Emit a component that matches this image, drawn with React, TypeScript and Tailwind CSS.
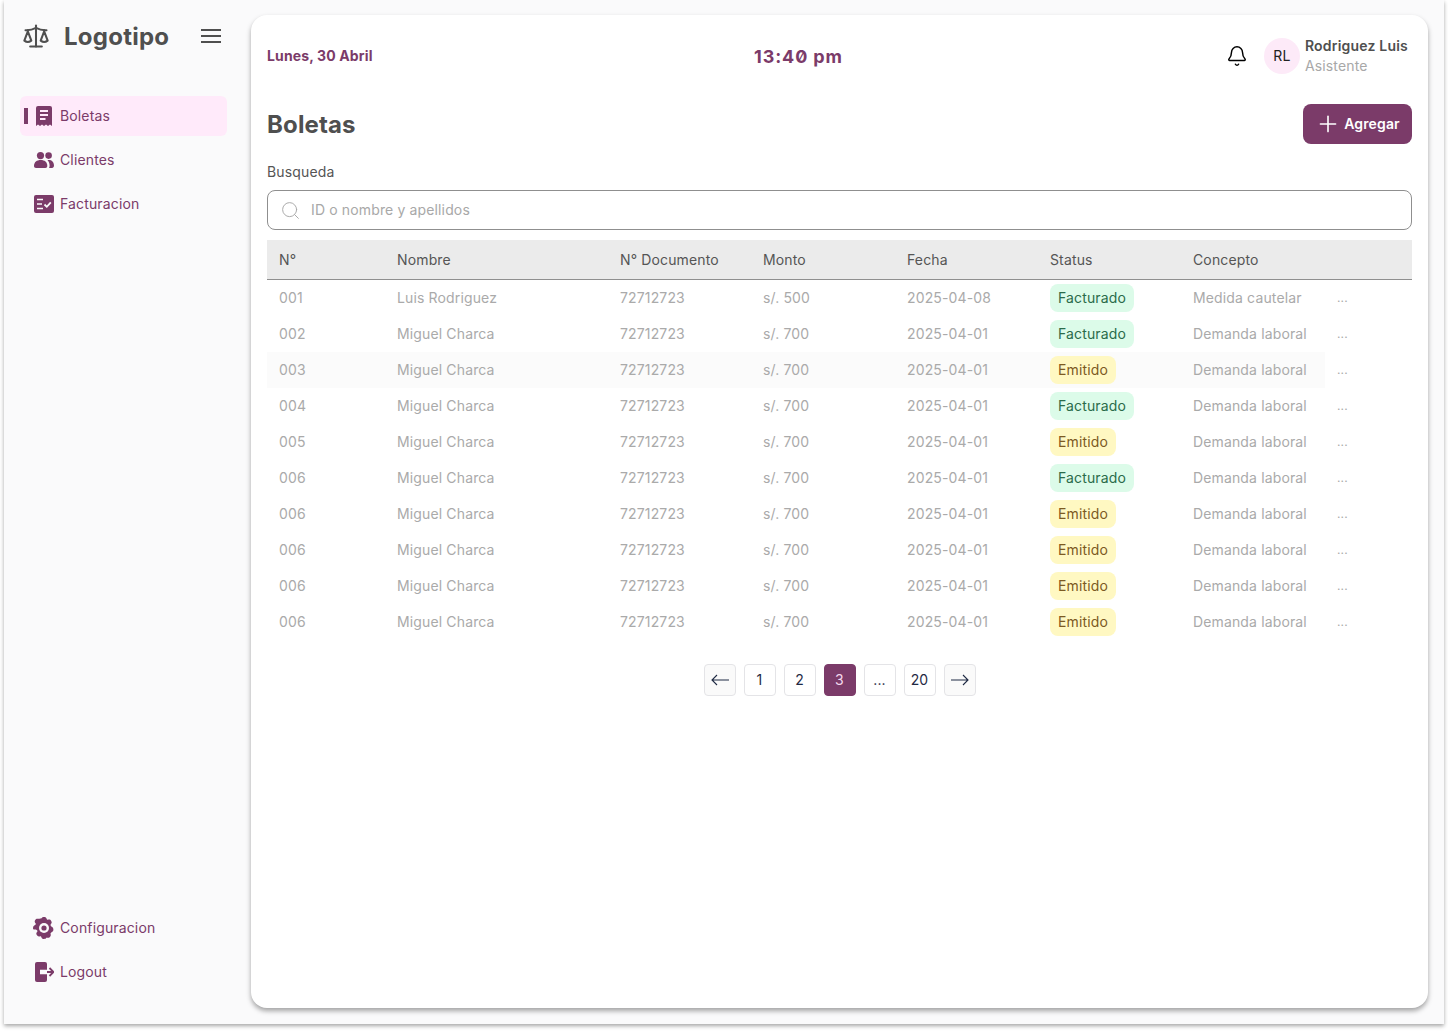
import { Bell, Plus, Scale, Search } from "lucide-react";

const rows = [
  { n: "001", name: "Luis Rodriguez", monto: "s/. 500", fecha: "2025-04-08", status: "Facturado", concepto: "Medida cautelar" },
  { n: "002", name: "Miguel Charca", monto: "s/. 700", fecha: "2025-04-01", status: "Facturado", concepto: "Demanda laboral" },
  { n: "003", name: "Miguel Charca", monto: "s/. 700", fecha: "2025-04-01", status: "Emitido", concepto: "Demanda laboral", hover: true },
  { n: "004", name: "Miguel Charca", monto: "s/. 700", fecha: "2025-04-01", status: "Facturado", concepto: "Demanda laboral" },
  { n: "005", name: "Miguel Charca", monto: "s/. 700", fecha: "2025-04-01", status: "Emitido", concepto: "Demanda laboral" },
  { n: "006", name: "Miguel Charca", monto: "s/. 700", fecha: "2025-04-01", status: "Facturado", concepto: "Demanda laboral" },
  { n: "006", name: "Miguel Charca", monto: "s/. 700", fecha: "2025-04-01", status: "Emitido", concepto: "Demanda laboral" },
  { n: "006", name: "Miguel Charca", monto: "s/. 700", fecha: "2025-04-01", status: "Emitido", concepto: "Demanda laboral" },
  { n: "006", name: "Miguel Charca", monto: "s/. 700", fecha: "2025-04-01", status: "Emitido", concepto: "Demanda laboral" },
  { n: "006", name: "Miguel Charca", monto: "s/. 700", fecha: "2025-04-01", status: "Emitido", concepto: "Demanda laboral" },
];

const cols = "grid grid-cols-[118px_223px_143px_144px_143px_143px_144px_1fr] items-center";

function ReceiptIcon() {
  return (
    <svg viewBox="0 0 16 20" className="h-5 w-4 shrink-0" fill="#7b3b69">
      <path d="M2 0h12a2 2 0 0 1 2 2v18l-2-1.4-2 1.4-2-1.4-2 1.4-2-1.4-2 1.4-2-1.4L0 20V2a2 2 0 0 1 2-2z" />
      <path d="M4 4h8v2H4zM4 8h8v2H4zM4 12h5.5v2H4z" fill="#ffeafa" />
    </svg>
  );
}

function UsersIcon() {
  return (
    <svg viewBox="0 0 20 16" className="h-4 w-5 shrink-0" fill="#7b3b69">
      <circle cx="6.5" cy="3.6" r="3.6" />
      <circle cx="14.6" cy="3.6" r="3.3" />
      <path d="M0 14c0-4 2.8-6 6.7-6s6.6 2 6.6 6c0 1.3-.8 2-2 2H2c-1.200 0-2-.7-2-2z" />
      <path d="M14.800 8c3 0 5.200 2 5.200 5.600 0 1.500-.8 2.400-2 2.400h-3c.4-.7.6-1.300.6-2.200 0-2.300-.8-4.300-2.100-5.500.4-.2.900-.3 1.300-.3z" />
    </svg>
  );
}

function BillingIcon() {
  return (
    <svg viewBox="0 0 20 18" className="h-[18px] w-5 shrink-0">
      <rect width="20" height="18" rx="2" fill="#7b3b69" />
      <path d="M3 4.500h6M3 9h5M3 13.500h6" stroke="#fafafb" strokeWidth="1.7" />
      <path d="M10.500 9.500l2.300 2.300 4-4.400" stroke="#fafafb" strokeWidth="1.8" fill="none" />
    </svg>
  );
}

function GearIcon() {
  return (
    <svg viewBox="0 0 22 22" className="h-[22px] w-[22px] shrink-0">
      <path
        fill="#7b3b69"
        d="M8.600 1.200C9 .4 9.800 0 11 0s2 .4 2.400 1.200l.7 1.500 1.700-.1c1-.1 1.800.3 2.400 1.300s.7 1.900.1 2.700l-.9 1.400.9 1.400.9.600c.8.500 1.200 1.300 1.200 2.400s-.4 1.900-1.200 2.400l-.9.600-.9 1.400c.6.800.5 1.700-.1 2.700s-1.400 1.400-2.400 1.300l-1.700-.1-.7 1.500C13 21.600 12.200 22 11 22s-2-.4-2.400-1.200l-.7-1.500-1.700.1c-1 .1-1.800-.3-2.400-1.300s-.7-1.900-.1-2.700l.9-1.400-.9-.9-.9-.6C.4 12.900 0 12.100 0 11s.4-1.900 1.200-2.400l.9-.6.9-.9-.9-1.400c-.6-.8-.5-1.700.1-2.700s1.400-1.400 2.400-1.300l1.700.1z"
      />
      <circle cx="11" cy="11" r="5" fill="#fafafb" />
      <circle cx="11" cy="11" r="2.600" fill="#7b3b69" />
    </svg>
  );
}

function LogoutIcon() {
  return (
    <svg viewBox="0 0 20 20" className="h-5 w-5 shrink-0">
      <path d="M3 0h8a2 2 0 0 1 2 2v16a2 2 0 0 1-2 2H3a2 2 0 0 1-2-2V2a2 2 0 0 1 2-2z" fill="#7b3b69" />
      <path d="M6 10h13M15.500 6l4 4-4 4" stroke="#fafafb" strokeWidth="4.500" fill="none" />
      <path d="M13 10h6M15.500 6l4 4-4 4" stroke="#7b3b69" strokeWidth="1.800" fill="none" />
      <path d="M6 10h7" stroke="#fafafb" strokeWidth="1.800" />
    </svg>
  );
}

function HamburgerIcon() {
  return (
    <svg viewBox="0 0 20 14" className="ml-[32px] h-[14px] w-5 shrink-0" stroke="#4f4f4f" strokeWidth="1.8">
      <path d="M0 1h20M0 7h20M0 13h20" />
    </svg>
  );
}

function PageArrow({ flip }: { flip?: boolean }) {
  return (
    <svg viewBox="0 0 18 12" className={"h-3 w-[18px] shrink-0 " + (flip ? "rotate-180" : "")} fill="none" stroke="#1f2a44" strokeWidth="1.1">
      <path d="M18 6H1M6 1L1 6l5 5" />
    </svg>
  );
}

function NavItem({ icon, label, active }: { icon: React.ReactNode; label: string; active?: boolean }) {
  return (
    <a
      className={
        "relative flex h-10 items-center rounded-md pl-[14px] text-sm tracking-[0.14px] text-[#7b3b69] " +
        (active ? "bg-[#ffeafa]" : "")
      }
    >
      {active && <span className="absolute left-1 top-3 h-4 w-1 bg-[#7b3b69]" />}
      <span className="flex w-5 justify-center">{icon}</span>
      <span className="ml-[6px]">{label}</span>
    </a>
  );
}

function PageButton({ children, current, arrow }: { children: React.ReactNode; current?: boolean; arrow?: boolean }) {
  return (
    <button
      className={
        "flex h-8 w-8 items-center justify-center rounded border text-sm " +
        (current
          ? "border-[#7b3b69] bg-[#7b3b69] text-[#f5d9ee]"
          : arrow
            ? "border-[#e4e4e7] bg-[#fafafa] text-[#1f2a44]"
            : "border-[#e4e4e7] bg-white text-[#1f2a44]")
      }
    >
      {children}
    </button>
  );
}

export default function App() {
  return (
    <div className="min-h-[1032px] bg-white font-['Inter',sans-serif]">
      <div className="ml-[4px] flex h-[1024px] w-[1440px] bg-[#fafafb] shadow-[0_2px_4px_rgba(0,0,0,0.35)]">
        <aside className="flex w-[247px] shrink-0 flex-col pb-[32px] pl-4 pr-6">
          <div className="flex h-[72px] items-center pl-[2px]">
            <Scale className="h-7 w-7 shrink-0 text-[#4f4f4f]" strokeWidth={1.75} />
            <span className="ml-[14px] pt-[2px] text-2xl font-bold tracking-[0.24px] text-[#4f4f4f]">Logotipo</span>
            <HamburgerIcon />
          </div>
          <nav className="mt-6 flex flex-col gap-1">
            <NavItem active icon={<ReceiptIcon />} label="Boletas" />
            <NavItem icon={<UsersIcon />} label="Clientes" />
            <NavItem icon={<BillingIcon />} label="Facturacion" />
          </nav>
          <nav className="mt-auto flex flex-col gap-1">
            <NavItem icon={<GearIcon />} label="Configuracion" />
            <NavItem icon={<LogoutIcon />} label="Logout" />
          </nav>
        </aside>

        <main className="mb-4 mt-[15px] flex w-[1177px] flex-col rounded-2xl bg-white px-4 tracking-[0.14px] shadow-[0_3px_5px_rgba(0,0,0,0.35)]">
          <header className="relative flex h-[82px] items-center">
            <span className="text-sm font-bold text-[#7b3b69]">Lunes, 30 Abril</span>
            <span className="absolute left-[487px] top-[28px] text-lg font-bold tracking-[0.9px] text-[#7b3b69] slashed-zero">
              13:40 pm
            </span>
            <div className="ml-auto flex items-center">
              <Bell className="h-[22px] w-[22px] shrink-0 text-black" strokeWidth={1.6} />
              <span className="ml-4 flex h-9 w-9 items-center justify-center rounded-full bg-[#fdeaf8] text-sm text-[#222]">
                RL
              </span>
              <div className="ml-[5px] mr-1 leading-5">
                <p className="text-sm font-semibold tracking-[0.2px] text-[#4f4f4f]">Rodriguez Luis</p>
                <p className="text-sm text-[#a8a8a8]">Asistente</p>
              </div>
            </div>
          </header>

          <div className="mt-[7px] flex h-10 items-center justify-between">
            <h1 className="pt-[2px] text-2xl font-bold text-[#4f4f4f]">Boletas</h1>
            <button className="flex h-10 w-[109px] items-center justify-center gap-[3px] rounded-lg bg-[#7b3b69] text-sm font-semibold text-white">
              <Plus className="h-[26px] w-[26px] shrink-0" strokeWidth={1.5} />
              Agregar
            </button>
          </div>

          <label className="mt-[18px] text-sm leading-5 text-[#555]">Busqueda</label>
          <div className="mt-2 flex h-10 items-center rounded-lg border border-[#8f8f8f] pl-3">
            <Search className="h-[21px] w-[21px] shrink-0 text-[#a8a8a8]" strokeWidth={1.1} />
            <span className="ml-[10px] text-sm text-[#a8a8a8]">ID o nombre y apellidos</span>
          </div>

          <div className="mt-[10px]">
            <div className={cols + " h-10 border-b border-[#8f8f8f] bg-[#ebebeb] pl-3 text-sm text-[#555]"}>
              <span className="-ml-3 pl-3">N°</span>
              <span>Nombre</span>
              <span>N° Documento</span>
              <span>Monto</span>
              <span>Fecha</span>
              <span>Status</span>
              <span>Concepto</span>
              <span />
            </div>
            {rows.map((r, i) => (
              <div key={i} className={cols + " relative h-9 pl-3 text-sm text-[#aaaaaa]"}>
                {r.hover && <div className="absolute inset-y-0 left-0 w-[1058px] bg-[#fbfbfb]" />}
                <span className="relative -ml-3 pl-3">{r.n}</span>
                <span className="relative">{r.name}</span>
                <span className="relative">72712723</span>
                <span className="relative">{r.monto}</span>
                <span className="relative">{r.fecha}</span>
                <span className="relative">
                  <span
                    className={
                      "inline-flex h-7 items-center rounded-lg px-2 " +
                      (r.status === "Facturado" ? "bg-[#dcfbe9] text-[#2b6b4a]" : "bg-[#fff8c2] text-[#7c5a22]")
                    }
                  >
                    {r.status}
                  </span>
                </span>
                <span className="relative">{r.concepto}</span>
                <span className="relative text-xs">...</span>
              </div>
            ))}
          </div>

          <div className="mt-6 flex justify-center gap-2">
            <PageButton arrow>
              <PageArrow />
            </PageButton>
            <PageButton>1</PageButton>
            <PageButton>2</PageButton>
            <PageButton current>3</PageButton>
            <PageButton>...</PageButton>
            <PageButton>20</PageButton>
            <PageButton arrow>
              <PageArrow flip />
            </PageButton>
          </div>
        </main>
      </div>
    </div>
  );
}
